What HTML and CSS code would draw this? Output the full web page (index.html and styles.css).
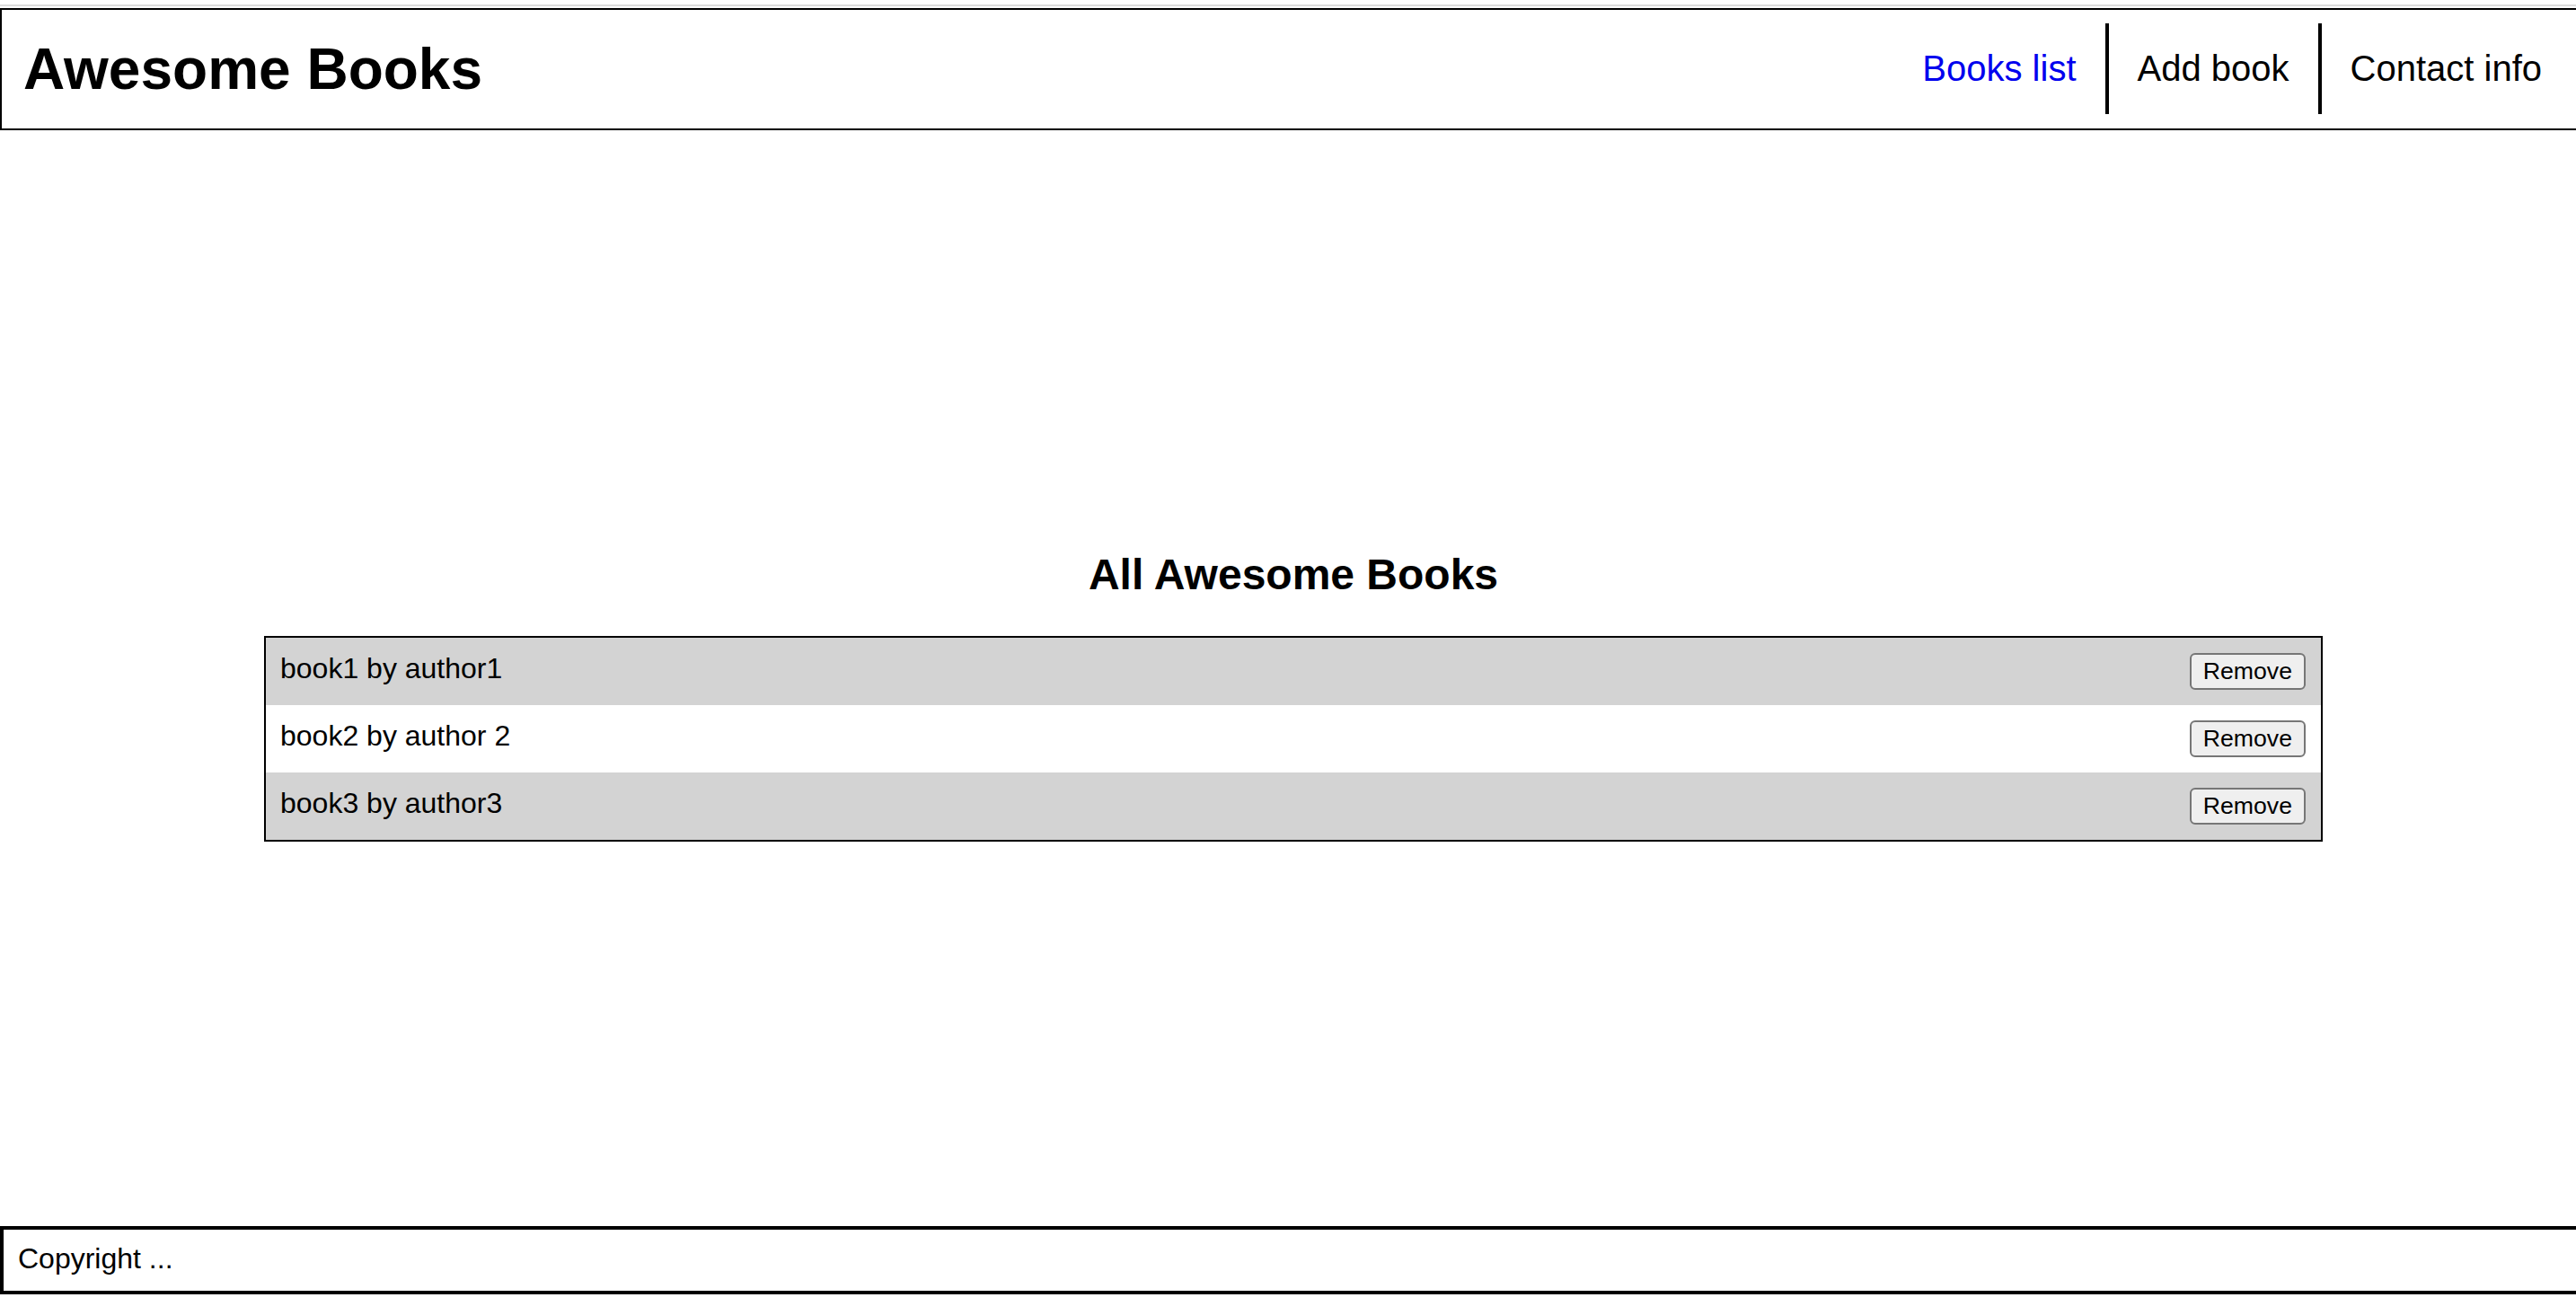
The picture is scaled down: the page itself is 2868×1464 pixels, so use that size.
FILE: index.html
```html
<!DOCTYPE html>
<html lang="en">
<head>
<meta charset="utf-8">
<title>Awesome Books</title>
<link rel="stylesheet" href="styles.css">
</head>
<body>
<div class="topline"></div>
<header class="site-header">
  <h1 class="logo">Awesome Books</h1>
  <nav class="nav">
    <ul class="nav-list">
      <li class="nav-item"><a class="nav-link active" href="#list">Books list</a></li>
      <li class="nav-item"><a class="nav-link" href="#add">Add book</a></li>
      <li class="nav-item"><a class="nav-link" href="#contact">Contact info</a></li>
    </ul>
  </nav>
</header>
<main class="content">
  <h2 class="section-title">All Awesome Books</h2>
  <ul class="book-list">
    <li class="book-row"><span class="book-text">book1 by author1</span><button class="remove-btn" type="button">Remove</button></li>
    <li class="book-row"><span class="book-text">book2 by author 2</span><button class="remove-btn" type="button">Remove</button></li>
    <li class="book-row"><span class="book-text">book3 by author3</span><button class="remove-btn" type="button">Remove</button></li>
  </ul>
</main>
<footer class="site-footer">Copyright ...</footer>
</body>
</html>
```
FILE: styles.css
```css
* {
  box-sizing: border-box;
}

html, body {
  margin: 0;
  padding: 0;
  background: #fff;
}

body {
  font-family: "Liberation Sans", Arial, sans-serif;
  color: #000;
  overflow-x: hidden;
}

.topline {
  margin-top: 5px;
  height: 2px;
  background: #dcdcdc;
}

.site-header {
  margin-top: 2px;
  display: flex;
  justify-content: space-between;
  align-items: center;
  border-top: 2px solid #000;
  border-bottom: 2px solid #000;
  border-left: 2px solid #000;
  padding: 15px 6px 16px 24px;
}

.logo {
  margin: 0;
  font-size: 64px;
  font-weight: bold;
  line-height: normal;
}

.nav-list {
  display: flex;
  list-style: none;
  margin: 0;
  padding: 0;
}

.nav-item {
  padding: 0 32px;
  height: 101px;
  line-height: 101px;
  font-size: 40px;
  border-right: 4px solid #000;
}

.nav-item:last-child {
  border-right: none;
}

.nav-link {
  color: #000;
  text-decoration: none;
}

.nav-link.active {
  color: #0000ee;
}

.content {
  padding: 467px 0 0 12px;
}

.section-title {
  margin: 0 0 41px;
  text-align: center;
  font-size: 48px;
  font-weight: bold;
  line-height: normal;
}

.book-list {
  list-style: none;
  margin: 0 auto;
  padding: 0;
  width: 2292px;
  border: 2px solid #000;
}

.book-row {
  display: flex;
  justify-content: space-between;
  align-items: center;
  padding: 17px 17px 17px 16px;
  font-size: 32px;
  line-height: 41px;
}

.book-text {
  line-height: 35px;
  margin-bottom: 6px;
}

.book-row:nth-child(odd) {
  background: #d3d3d3;
}

.book-row:nth-child(even) {
  background: #fff;
}

.remove-btn {
  font-family: "Liberation Sans", Arial, sans-serif;
  font-size: 26.67px;
  height: 41px;
  padding: 0 13px;
  color: #000;
  background: #efefef;
  border: 2px solid #767676;
  border-radius: 6px;
}

.site-footer {
  margin-top: 428px;
  border-top: 4px solid #000;
  border-bottom: 4px solid #000;
  border-left: 4px solid #000;
  padding: 13px 16px 17px;
  font-size: 32px;
  line-height: 38px;
}
```
